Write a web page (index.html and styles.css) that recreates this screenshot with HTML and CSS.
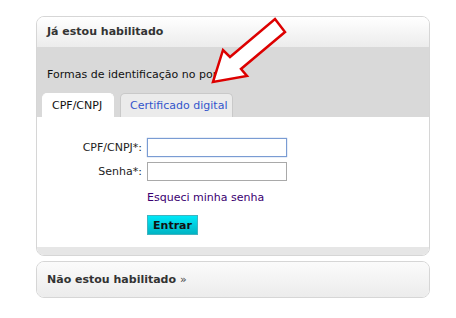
FILE: index.html
```html
<!DOCTYPE html>
<html lang="pt-BR">
<head>
    <meta charset="UTF-8">
    <title>Acesso</title>
    <link rel="stylesheet" href="styles.css">
</head>
<body>
    <div class="box">
        <div class="box-head">Já estou habilitado</div>
        <div class="box-gray">
            <p class="intro">Formas de identificação no portal</p>
            <div class="tabs">
                <span class="tab active">CPF/CNPJ</span>
                <span class="tab">Certificado digital</span>
            </div>
        </div>
        <div class="box-body">
            <form class="login">
                <label for="cpf">CPF/CNPJ*:</label>
                <input type="text" id="cpf" class="focused">
                <label for="senha">Senha*:</label>
                <input type="password" id="senha">
                <span></span>
                <a href="#" class="forgot">Esqueci minha senha</a>
                <span></span>
                <div><button type="button" class="btn">Entrar</button></div>
            </form>
        </div>
        <div class="box-foot"></div>
    </div>

    <div class="box box-closed">
        <div class="closed-head">Não estou habilitado <span class="raquo">&raquo;</span></div>
    </div>

    <svg class="arrow" width="456" height="100" viewBox="0 0 456 100">
        <polygon points="275,19 285,32 241,69 247,76 213,82 223,50 230,57" fill="#fff" stroke="#dd0000" stroke-width="2.5" stroke-linejoin="miter"/>
    </svg>
</body>
</html>
```

FILE: styles.css
```css
body {
    margin: 0;
    background-color: #ffffff;
    font-family: "DejaVu Sans", Verdana, sans-serif;
    font-size: 11px;
    color: #222;
    position: relative;
}
.box {
    width: 392px;
    margin: 16px 0 0 36px;
    border: 1px solid #d6d6d6;
    border-radius: 8px;
    overflow: hidden;
}
.box-head {
    height: 30px;
    line-height: 30px;
    padding-left: 10px;
    font-weight: bold;
    color: #333;
    background: linear-gradient(#ffffff, #ececec);
}
.box-gray {
    background-color: #d9d9d9;
    height: 70px;
    padding: 0 5px;
    display: flex;
    flex-direction: column;
    justify-content: flex-end;
}
.intro {
    margin: 0 0 12px 5px;
    color: #111;
}
.tabs {
    display: flex;
    gap: 6px;
}
.tab {
    box-sizing: border-box;
    flex: none;
    white-space: nowrap;
    height: 24px;
    line-height: 23px;
    padding: 0 0 0 9px;
    border-radius: 5px 5px 0 0;
    background-color: #ebebeb;
    border-top: 1px solid #c9c9c9;
    border-left: 1px solid #c9c9c9;
    border-right: 1px solid #c9c9c9;
    color: #3355cc;
    width: 113px;
}
.tab.active {
    background-color: #ffffff;
    border-color: #ffffff;
    color: #111;
    width: 72px;
}
.box-body {
    background-color: #ffffff;
    height: 130px;
}
.login {
    display: grid;
    grid-template-columns: 105px 140px;
    column-gap: 5px;
    row-gap: 5px;
    align-items: center;
    padding-top: 21px;
}
.login label {
    text-align: right;
    color: #222;
}
.login input {
    height: 15px;
    border: 1px solid #a9a9a9;
    padding: 1px 2px;
    margin: 0;
}
.login input.focused {
    border-color: #7a9cd3;
    box-shadow: 0 0 1px #7a9cd3;
}
.forgot {
    color: #3a0070;
    text-decoration: none;
    margin-top: 5px;
}
.btn {
    margin-top: 6px;
    width: 51px;
    height: 20px;
    border: 1px solid #3fb4c0;
    background: linear-gradient(#00e8f8, #00b4c4);
    font-family: "DejaVu Sans", Verdana, sans-serif;
    font-size: 11px;
    font-weight: bold;
    color: #111;
    padding: 0;
}
.box-foot {
    height: 8px;
    background-color: #e6e6e6;
}
.box-closed {
    margin-top: 5px;
}
.closed-head {
    height: 35px;
    line-height: 35px;
    padding-left: 10px;
    font-weight: bold;
    color: #333;
    background: linear-gradient(#fbfbfb, #ececec);
}
.raquo {
    font-weight: normal;
    color: #444;
}
.arrow {
    position: absolute;
    left: 0;
    top: 0;
}
```
